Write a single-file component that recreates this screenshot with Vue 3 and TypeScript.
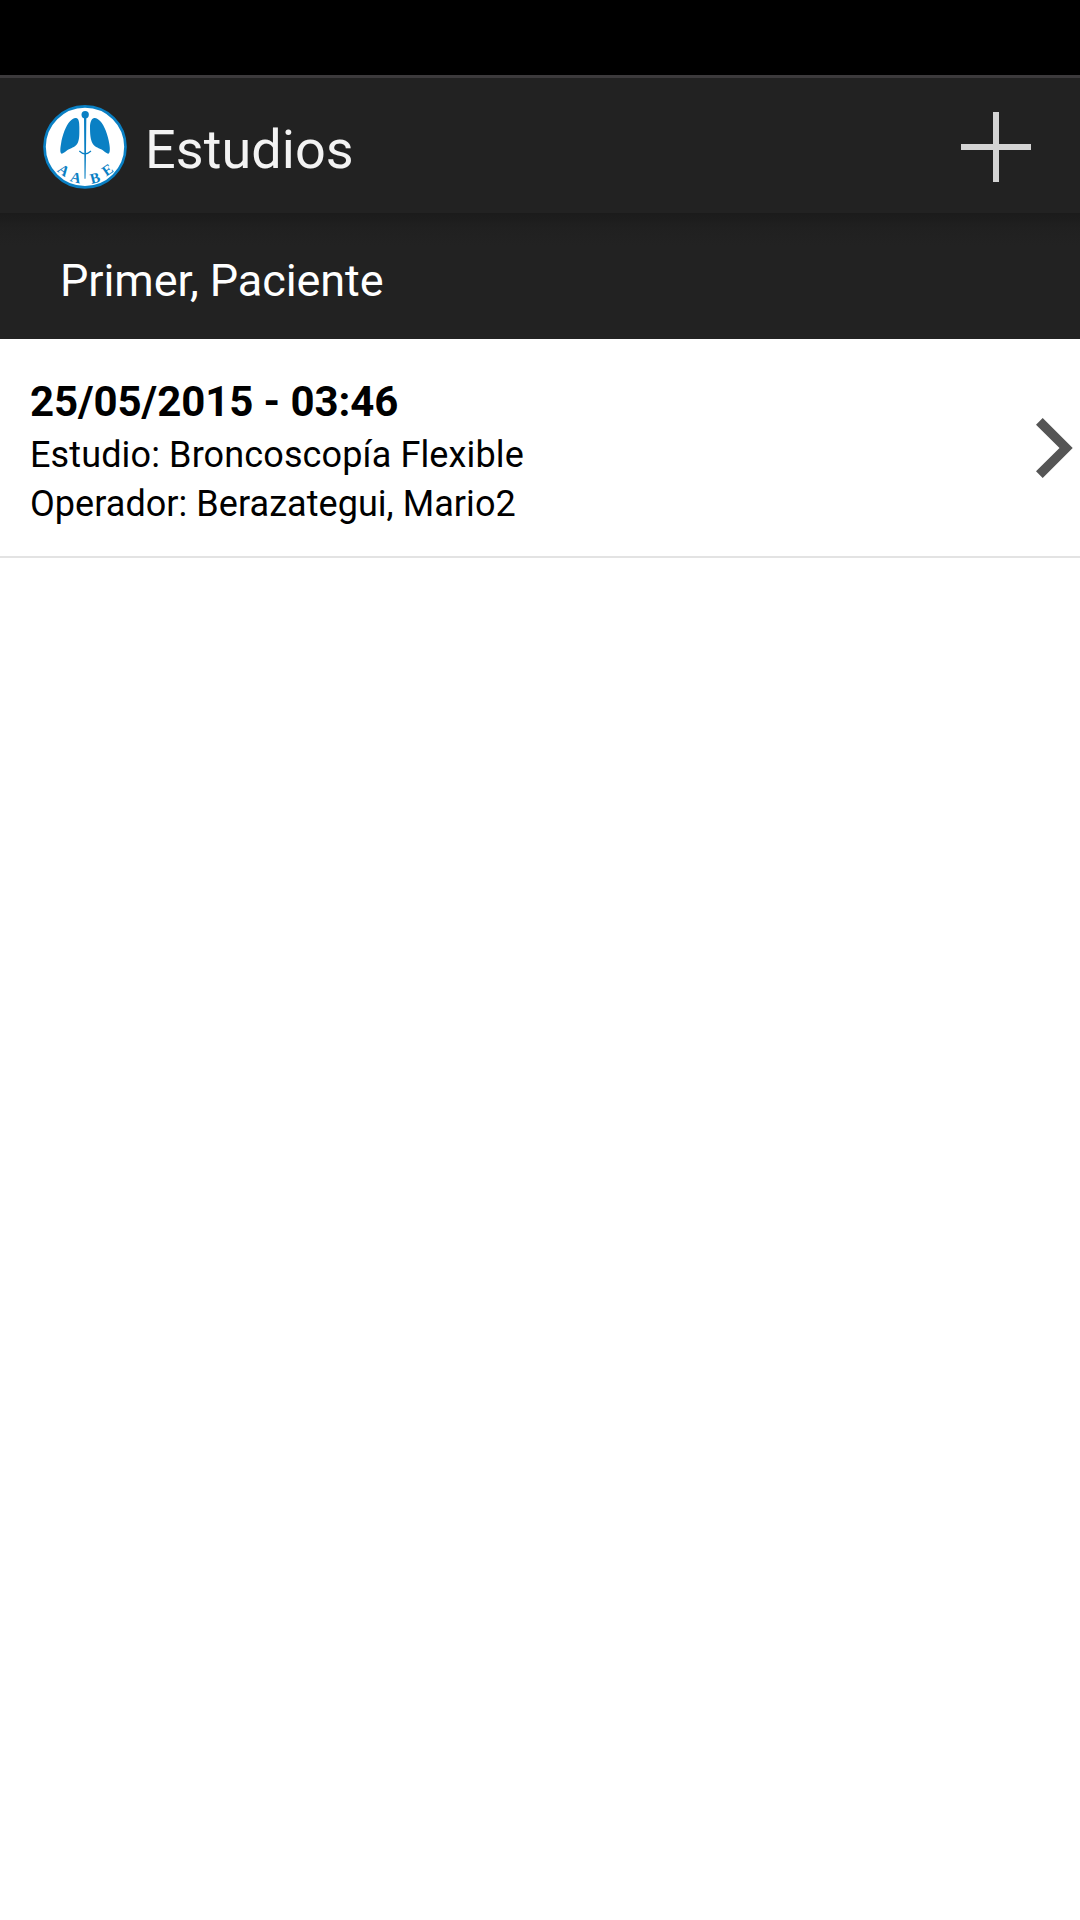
<template>
  <div class="screen">
    <div class="status-bar"></div>
    <header class="action-bar">
      <svg class="logo" viewBox="39 45 252 252" width="84" height="84">
        <circle cx="165" cy="170.500" r="121.500" fill="#fff" stroke="#0a80c4" stroke-width="8" />
        <g fill="#0a80c4">
          <circle cx="165.500" cy="74" r="11" />
          <path d="M162 82h7l-1 110-1.500 74h-3l-.5-74z" />
          <path d="M139 84c8 2 9 14 9 28 0 18 1 36-5 47-5 11-17 14-26 19-9 4-15 13-22 13-6-1-4-18-2-29 4-27 15-55 27-68 6-7 12-11 19-10z" />
          <path d="M192 84c-8 2-12 14-12 28 0 18 1 36 7 47 5 11 17 14 26 19 9 4 15 13 22 13 6-1 5-18 3-29-4-27-15-55-27-68-6-7-12-11-19-10z" />
        </g>
        <path d="M148 183q17 17 35 0" fill="none" stroke="#0a80c4" stroke-width="3.500" />
        <text
          v-for="(letter, index) in logoLetters"
          :key="index"
          :transform="`translate(${letter.x} ${letter.y}) rotate(${letter.angle})`"
          class="logo-letter"
        >{{ letter.char }}</text>
      </svg>
      <h1>Estudios</h1>
      <button class="add-button" aria-label="Agregar estudio">
        <svg viewBox="0 0 70 70" width="70" height="70">
          <path d="M0 35h70M35 0v70" stroke="#d4d4d4" stroke-width="6" />
        </svg>
      </button>
    </header>
    <div class="patient">{{ patient }}</div>
    <ul class="study-list">
      <li v-for="study in studies" :key="study.date" class="study">
        <div class="study-info">
          <h2>{{ study.date }}</h2>
          <p class="study-name">Estudio: {{ study.name }}</p>
          <p>Operador: {{ study.operator }}</p>
        </div>
        <svg class="chevron" viewBox="0 0 37 60" width="37" height="60">
          <path d="M6.700 0L36.700 30 6.700 60 0 53.300 23.500 30 0 6.700z" fill="#555" />
        </svg>
      </li>
    </ul>
  </div>
</template>

<script setup lang="ts">
import { ref } from 'vue';

interface Study {
  date: string;
  name: string;
  operator: string;
}

const patient = ref('Primer, Paciente');

const studies = ref<Study[]>([
  { date: '25/05/2015 - 03:46', name: 'Broncoscopía Flexible', operator: 'Berazategui, Mario2' }
]);

// letters follow the lower edge of the badge
const logoLetters = [
  { char: 'A', x: 92, y: 252, angle: 36 },
  { char: 'A', x: 134, y: 277, angle: 14 },
  { char: 'B', x: 199, y: 278, angle: -15 },
  { char: 'E', x: 241, y: 252, angle: -35 }
];
</script>

<style>
body {
  margin: 0;
  background: #fff;
}
</style>

<style scoped>
.screen {
  min-height: 1920px;
  background: #fff;
  font-family: Roboto, "Liberation Sans", sans-serif;
}

.status-bar {
  height: 75px;
  background: #000;
}

.action-bar {
  box-sizing: border-box;
  height: 138px;
  padding: 3px 49px 0 43px;
  border-top: 3px solid #3c3a3c;
  background: #222;
  display: flex;
  align-items: center;
}

.logo {
  display: block;
}

.logo-letter {
  font-family: "Liberation Serif", serif;
  font-size: 44px;
  font-weight: bold;
  fill: #0a80c4;
  text-anchor: middle;
}

h1 {
  margin: 5px 0 0 18px;
  font-size: 54px;
  font-weight: 400;
  line-height: 63px;
  letter-spacing: 0.05px;
  color: #f3f3f3;
}

.add-button {
  margin: 0 0 0 auto;
  padding: 0;
  border: none;
  background: none;
}

.add-button svg {
  display: block;
}

.patient {
  box-sizing: border-box;
  height: 126px;
  padding: 41px 60px 0;
  background: linear-gradient(#1b1b1b, #1d1d1d 6px, #202020 14px, #222 32px);
  color: #fff;
  font-size: 45px;
  line-height: 54px;
  letter-spacing: -0.09px;
}

.study-list {
  margin: 0;
  padding: 0;
  list-style: none;
}

.study {
  box-sizing: border-box;
  height: 219px;
  padding: 0 7px 0 30px;
  border-bottom: 2px solid #e3e3e3;
  display: flex;
  justify-content: space-between;
  align-items: center;
}

.study-info {
  padding-top: 11px;
}

h2 {
  margin: 0 0 5px;
  font-size: 42px;
  font-weight: 700;
  line-height: 49px;
  letter-spacing: -0.07px;
  color: #000;
}

p {
  margin: 0;
  font-size: 36px;
  line-height: 49px;
  letter-spacing: 0.05px;
  color: #000;
}

.study-name {
  letter-spacing: 0.13px;
}
</style>
